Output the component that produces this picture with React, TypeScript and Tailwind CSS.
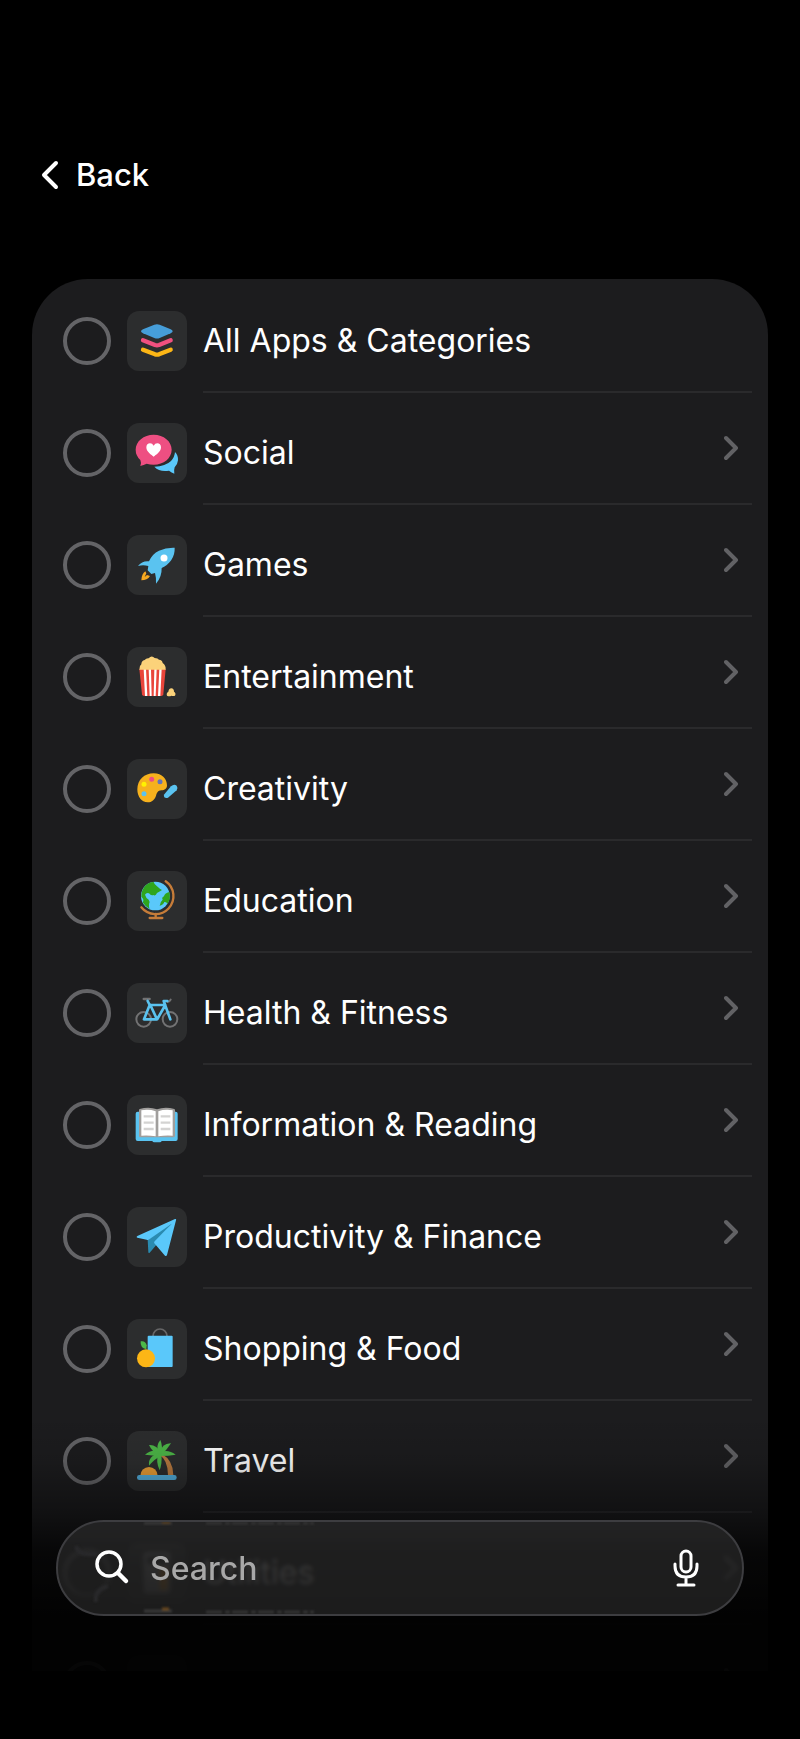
import React, { useState } from 'react';

const LayersIcon = () => (
  <>
    <path fill="#469ed9" d="M48 55 82 41Q90 38 98 41L131 55Q143 61 131 67L98 81Q90 84 82 81L48 67Q36 61 48 55Z" />
    <g fill="none" strokeWidth="13" strokeLinecap="round" strokeLinejoin="round">
      <path stroke="#f0507f" d="M48 88 84 102Q90 104 96 102L131 88" />
      <path stroke="#fcb616" d="M48 116 84 130Q90 132 96 130L131 116" />
    </g>
  </>
);

const SocialIcon = () => (
  <>
    <path fill="#5ac8fa" d="M82 131Q116 130 132 114Q143 102 144 87Q154 97 153 112Q152 124 143 133Q140 142 142 152Q134 149 126 143Q98 148 82 131Z" />
    <path fill="#ee4f82" d="M80 35C110 35 134 55 134 80S110 125 80 125Q69 125 59 122Q50 126 40 129Q44 120 40 111Q26 98 26 80C26 55 50 35 80 35Z" />
    <path fill="#fff" d="M80 101C74 96 58 87 58 73C58 65 63 61 69 61Q76 61 80 68Q84 61 91 61C97 61 102 65 102 73C102 87 86 96 80 101Z" />
  </>
);

const RocketIcon = () => (
  <>
    <path fill="#5ac3f0" d="M143 38Q144 58 133 75Q122 91 104 99Q105 126 87 146Q88 128 84 114L73 117L62 106L64 93Q48 88 33 93Q45 77 66 79Q76 56 96 47Q117 37 143 38Z" />
    <circle cx="111" cy="69" r="10.500" fill="#fff" />
    <path fill="#f6a820" d="M55 109Q44 116 43 136Q61 136 69 123L60 120L53 126L58 115Z" />
  </>
);

const PopcornIcon = () => (
  <>
    <path fill="#e9453b" d="M37 66H116L109 142Q108 147 103 147H51Q46 147 45 142Z" />
    <path fill="#fff" d="M50 66H57L61 147H54ZM65 66H72L74 147H68ZM82 66H89L86 147H80ZM97 66H104L100 147H93Z" />
    <g fill="#fbd27a">
      <path d="M37 68Q36 57 43 52Q43 41 53 39Q58 33 65 34Q74 23 83 33Q93 33 96 38Q106 39 107 48Q117 54 116 68Z" />
      <path d="M120 146Q117 138 124 134Q126 124 133 124Q141 125 141 134Q148 138 144 146Q138 148 133 146Q127 149 120 146Z" />
    </g>
  </>
);

const PaletteIcon = () => (
  <>
    <path fill="#f6b11d" d="M80 43C106 43 120 61 120 79C120 89 113 94 103 94C92 95 90 101 87 110C83 122 75 130 62 130C43 130 31 113 31 91C31 63 52 43 80 43Z" />
    <circle cx="74" cy="61" r="7.500" fill="#ee4f82" />
    <circle cx="99" cy="68" r="7.500" fill="#6573b8" />
    <circle cx="51" cy="76" r="7.500" fill="#fff200" />
    <circle cx="51" cy="104" r="7.500" fill="#5ac3f0" />
    <path fill="#5ac3f0" d="M112 106 132 82Q141 74 149 80Q154 87 149 94L123 116Q117 119 112 115Q109 111 112 106Z" />
  </>
);

const GlobeIcon = () => (
  <>
    <circle cx="85" cy="75" r="43" fill="#5ac8fa" />
    <g fill="#2fa51d">
      <path d="M54 45Q66 33 80 33Q82 41 90 46Q98 54 105 57Q98 62 90 66Q86 76 79 72Q72 75 66 67Q58 64 54 71Q57 82 65 86Q70 92 66 99Q65 107 68 114Q55 107 47 94Q53 86 43 77Q43 58 54 45Z" />
      <path d="M127 63Q132 85 121 99Q119 92 112 93Q108 103 98 104Q99 93 107 86Q103 80 111 76Q112 67 127 63Z" />
    </g>
    <g fill="none" stroke="#c67c39" strokeWidth="7" strokeLinecap="round">
      <path d="M116 31A54 54 0 1 1 43 109" />
      <path d="M86 129V141M68 141H106" />
    </g>
  </>
);

const BikeIcon = () => (
  <g fill="none" strokeLinecap="round" strokeLinejoin="round">
    <g stroke="#727273" strokeWidth="6">
      <circle cx="50" cy="109" r="22" />
      <circle cx="129" cy="109" r="22" />
      <path d="M50 48H68" strokeWidth="7" />
      <path d="M122 57Q128 56 131 50" />
    </g>
    <g stroke="#5ac3f0" strokeWidth="8">
      <path d="M62 54 68 66 51 109H90L70 66M68 66H115L91 108M121 54H110L130 109" />
    </g>
  </g>
);

const BookIcon = () => (
  <>
    <path fill="#5ac3f0" d="M32 50H146Q152 50 152 56V132Q152 138 146 138H104Q103 142 98 142H82Q77 142 76 138H32Q26 138 26 132V56Q26 50 32 50Z" />
    <path fill="#a09e9c" d="M38 42Q66 34 90 43Q114 34 142 42Q144 43 144 46V122Q144 127 139 127H41Q36 127 36 122V46Q36 43 38 42Z" />
    <path fill="#fff" d="M43 46Q66 42 86 49V124Q64 120 43 122ZM94 49Q114 42 137 46V122Q116 120 94 124Z" />
    <path fill="none" stroke="#d4d3d2" strokeWidth="7" d="M50 64H80M50 83H80M50 102H80M101 64H130M101 83H130M101 102H130" />
  </>
);

const PlaneIcon = () => (
  <>
    <path fill="#2a8bb0" d="M62 98 136 46 86 116 68 137Q64 140 64 135Z" />
    <path fill="#5ac8fa" d="M144 36Q149 35 147 40L120 144Q118 149 114 146L82 109Q80 106 83 103L134 50L67 97Q63 100 59 98L31 92Q26 90 31 87Z" />
  </>
);

const ShoppingIcon = () => (
  <>
    <path fill="none" stroke="#666667" strokeWidth="5" d="M78 51A21 21 0 0 1 120 51" />
    <rect x="62" y="50" width="75" height="94" rx="3" fill="#5ac8fa" />
    <circle cx="57" cy="118" r="27" fill="#fcb616" />
    <path fill="#4db848" d="M41 67Q55 64 59 79L58 91Q39 87 41 67Z" />
  </>
);

const PalmIcon = () => (
  <>
    <path fill="#b97a40" d="M98 73Q122 86 123 132H139Q139 88 104 68Z" />
    <path fill="#e79c36" d="M40 134A26 26 0 0 1 92 134Z" />
    <rect x="30" y="132" width="119" height="15" rx="7" fill="#52addb" />
    <g fill="#4db848">
      <path d="M100 27Q85 44 94 71L103 69Q108 46 100 27Z" />
      <path d="M132 37Q105 36 97 68L105 71Q121 54 132 37Z" />
      <path d="M146 71Q120 52 97 66L100 75Q124 75 146 71Z" />
      <path d="M54 71Q76 52 100 64L98 76Q76 73 54 71Z" />
      <path d="M66 42Q88 40 103 66L94 71Q75 62 66 42Z" />
      <path d="M66 104Q62 76 97 66L102 74Q82 84 66 104Z" />
      <path d="M98 118Q86 92 93 71L103 70Q106 98 98 118Z" />
    </g>
  </>
);

const CalculatorIcon = () => (
  <>
    <rect x="50" y="28" width="80" height="124" rx="10" fill="#8e8e93" />
    <rect x="60" y="40" width="60" height="24" rx="4" fill="#2d2e2f" />
    <rect x="98" y="76" width="24" height="66" rx="4" fill="#f6961d" />
  </>
);

const OtherIcon = () => (
  <g fill="#8e8e93">
    <circle cx="50" cy="90" r="12" />
    <circle cx="90" cy="90" r="12" />
    <circle cx="130" cy="90" r="12" />
  </g>
);

// the last row only peeks out above the bottom edge, so it carries no title
const categories = [
  { id: 'all', name: 'All Apps & Categories', title: 'All Apps & Categories', icon: LayersIcon, expandable: false },
  { id: 'social', name: 'Social', title: 'Social', icon: SocialIcon, expandable: true },
  { id: 'games', name: 'Games', title: 'Games', icon: RocketIcon, expandable: true },
  { id: 'entertainment', name: 'Entertainment', title: 'Entertainment', icon: PopcornIcon, expandable: true },
  { id: 'creativity', name: 'Creativity', title: 'Creativity', icon: PaletteIcon, expandable: true },
  { id: 'education', name: 'Education', title: 'Education', icon: GlobeIcon, expandable: true },
  { id: 'health', name: 'Health & Fitness', title: 'Health & Fitness', icon: BikeIcon, expandable: true },
  { id: 'reading', name: 'Information & Reading', title: 'Information & Reading', icon: BookIcon, expandable: true },
  { id: 'productivity', name: 'Productivity & Finance', title: 'Productivity & Finance', icon: PlaneIcon, expandable: true },
  { id: 'shopping', name: 'Shopping & Food', title: 'Shopping & Food', icon: ShoppingIcon, expandable: true },
  { id: 'travel', name: 'Travel', title: 'Travel', icon: PalmIcon, expandable: true },
  { id: 'utilities', name: 'Utilities', title: 'Utilities', icon: CalculatorIcon, expandable: true },
  { id: 'other', name: 'Other', title: '', icon: OtherIcon, expandable: true },
];

export default function App() {
  const [selected, setSelected] = useState<string[]>([]);

  const toggle = (id: string) =>
    setSelected(prev => (prev.includes(id) ? prev.filter(x => x !== id) : [...prev, id]));

  return (
    <div className="relative h-screen flex flex-col overflow-hidden bg-black text-white font-['Inter',sans-serif] pb-17">
      {/* Header */}
      <header className="h-[279px] shrink-0 px-10 pt-[151px]">
        <button type="button" className="flex items-center gap-4 h-12 text-[31px] font-medium">
          <svg className="w-5 h-8" viewBox="0 0 20 32" fill="none" stroke="currentColor" strokeWidth="4" strokeLinecap="round" strokeLinejoin="round">
            <path d="M16 4 4 16 16 28" />
          </svg>
          Back
        </button>
      </header>

      {/* Categories */}
      <main className="relative flex-1 min-h-0 mx-8 pt-0.5 overflow-hidden rounded-t-[56px] bg-[#1c1c1e]">
        <ul>
          {categories.map(({ id, name, title, icon: Icon, expandable }) => (
            <li key={id} className="flex h-28 pl-[31px] pr-4">
              <label htmlFor={id} className="flex items-center gap-4 pt-2">
                <input
                  id={id}
                  type="checkbox"
                  aria-label={name}
                  checked={selected.includes(id)}
                  onChange={() => toggle(id)}
                  className="appearance-none w-12 h-12 rounded-full border-4 border-[#646467] checked:bg-[#0a84ff] checked:border-[#0a84ff]"
                />
                <svg className="w-15 h-15 rounded-xl bg-[#2c2d2e]" viewBox="0 0 180 180" aria-hidden="true">
                  <Icon />
                </svg>
              </label>
              <div className="flex-1 flex items-center justify-between ml-4 pr-3 border-b-2 border-[#2a2a2c]">
                <label htmlFor={id} className="pt-2.5 text-[32px] whitespace-nowrap">{title}</label>
                {expandable && (
                  <button type="button" aria-label={`Show ${name}`}>
                    <svg className="w-4 h-7" viewBox="0 0 16 28" fill="none" stroke="#626265" strokeWidth="4" strokeLinecap="round" strokeLinejoin="round">
                      <path d="M2 4 12 14 2 24" />
                    </svg>
                  </button>
                )}
              </div>
            </li>
          ))}
        </ul>
        <div className="pointer-events-none absolute inset-x-0 bottom-0 h-64 bg-[linear-gradient(to_bottom,transparent,rgb(0_0_0/0.1)_18%,rgb(0_0_0/0.4)_38%,rgb(0_0_0/0.76)_54%,rgb(0_0_0/0.84)_66%,rgb(0_0_0/0.94)_80%)]" />
      </main>

      {/* Search */}
      <div className="absolute inset-x-14 bottom-[123px] h-24 flex items-center gap-5 pl-9 pr-[42px] overflow-hidden rounded-full border-2 border-[#3d3d40] bg-[#3c3c3c]/45 backdrop-blur-[2px]">
        {/* light bent along the glass edge */}
        <svg className="absolute left-0 top-0 w-72 h-23 blur-[1px] pointer-events-none" viewBox="0 0 288 92" fill="none" aria-hidden="true">
          <path d="M86 1H114M86 89H114" stroke="#3a3a3a" strokeWidth="3" />
          <path d="M104 0H112M104 87H111" stroke="#6a481e" strokeWidth="3" />
          <path d="M148 1H256M148 90H256" stroke="#343434" strokeWidth="3" strokeDasharray="16 3 5 2" />
          <path d="M18 24Q20 34 38 32M50 64Q36 68 38 80" stroke="#29292b" strokeWidth="4" />
        </svg>
        <label htmlFor="search" aria-label="Search" className="shrink-0">
          <svg className="w-9 h-9" viewBox="0 0 36 36" fill="none" stroke="currentColor" strokeLinecap="round" aria-hidden="true">
            <circle cx="15" cy="14" r="12" strokeWidth="3.500" />
            <path d="M24 23 32 31" strokeWidth="4.500" />
          </svg>
        </label>
        <input
          id="search"
          type="text"
          placeholder="Search"
          className="flex-1 min-w-0 pt-0.5 bg-transparent text-[32px] outline-none placeholder:font-medium placeholder:text-[#a8a8a8]"
        />
        <button type="button" aria-label="Dictate">
          <svg className="w-7 h-10" viewBox="0 0 28 40" fill="none" stroke="currentColor" strokeWidth="3" strokeLinecap="round">
            <rect x="9" y="3" width="10" height="21" rx="5" />
            <path d="M3 16V18Q3 29 14 29Q25 29 25 18V16M14 29V37M6 37H22" />
          </svg>
        </button>
      </div>
    </div>
  );
}
